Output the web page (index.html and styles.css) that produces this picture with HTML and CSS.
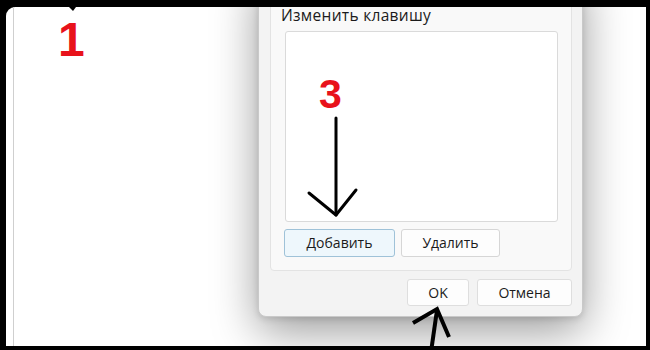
FILE: index.html
```html
<!DOCTYPE html>
<html lang="ru">
<head>
<meta charset="utf-8">
<link rel="stylesheet" href="styles.css">
</head>
<body>
<div class="frame">
  <div class="desk">
    <div class="dialog">
      <div class="group">
        <div class="label">Изменить клавишу</div>
        <div class="list"></div>
        <div class="row">
          <button class="btn btn-add">Добавить</button>
          <button class="btn btn-del">Удалить</button>
        </div>
      </div>
      <div class="footer">
        <button class="btn btn-ok">OK</button>
        <button class="btn btn-cancel">Отмена</button>
      </div>
    </div>
  </div>
</div>
<div class="top-band"></div>
<div class="num num-1">1</div>
<div class="num num-3">3</div>
<svg class="marks" width="650" height="350" viewBox="0 0 650 350">
  <polygon points="69,7 76,7 73,11" fill="#000"/>
  <g stroke="#000" stroke-width="3" fill="none" stroke-linecap="round" stroke-linejoin="round">
    <line x1="336" y1="118" x2="336" y2="215"/>
    <polyline points="309,193 336,215 356,190"/>
  </g>
  <g stroke="#000" stroke-width="4" fill="none" stroke-linecap="butt" stroke-linejoin="miter">
    <line x1="437" y1="310" x2="431" y2="352"/>
    <polyline points="413,323 437,309 449,337"/>
  </g>
</svg>
</body>
</html>
```
FILE: styles.css
```css
* { box-sizing: border-box; }
html, body { margin: 0; padding: 0; }
body {
  width: 650px;
  height: 350px;
  background: #000;
  position: relative;
  overflow: hidden;
  font-family: "Open Sans", "Noto Sans", sans-serif;
}
.frame {
  padding: 7px 4px 4px 6px;
  height: 350px;
}
.desk {
  position: relative;
  height: 339px;
  background: #fff;
  border-top-left-radius: 9px;
}
.desk::before {
  content: "";
  position: absolute;
  left: 7px;
  top: 0;
  bottom: 0;
  width: 1px;
  background: #cfcfcf;
}
.top-band {
  position: absolute;
  left: 0;
  top: 0;
  width: 650px;
  height: 7px;
  background: #000;
}
.dialog {
  position: absolute;
  left: 252px;
  top: -37px;
  width: 325px;
  background: #f3f3f3;
  border: 1px solid #c9c9c9;
  border-radius: 8px;
  padding: 11px 10px 10px 11px;
  box-shadow: 0 14px 46px rgba(0,0,0,0.4), 0 2px 6px rgba(0,0,0,0.12);
}
.group {
  background: #f9f9f9;
  border: 1px solid #e3e3e3;
  border-radius: 4px;
  padding: 24px 13px 13px 10px;
}
.label {
  font-size: 15.5px;
  line-height: 16px;
  letter-spacing: 0.3px;
  color: #1b1b1b;
  white-space: nowrap;
}
.list {
  margin: 8px 0 0 4px;
  height: 191px;
  background: #fff;
  border: 1px solid #dadada;
  border-radius: 3px;
}
.row {
  display: flex;
  gap: 6px;
  margin: 7px 0 0 3px;
}
.btn {
  font-family: "Open Sans", "Noto Sans", sans-serif;
  font-size: 14px;
  color: #1b1b1b;
  background: #fdfdfd;
  border: 1px solid #d6d6d6;
  border-radius: 3px;
  padding: 0;
  height: 28px;
  line-height: 24px;
}
.btn-add {
  width: 111px;
  background: #eef7fc;
  border-color: #9fc2d8;
}
.btn-del { width: 99px; }
.footer {
  display: flex;
  justify-content: flex-end;
  gap: 8px;
  margin-top: 8px;
}
.btn-ok, .btn-cancel {
  height: 27px;
  border-color: #dedede;
}
.btn-ok { width: 62px; }
.btn-cancel { width: 95px; }
.num {
  position: absolute;
  font-family: "Liberation Sans", Arial, sans-serif;
  font-weight: bold;
  color: #e8121b;
  line-height: 1;
}
.num-1 {
  left: 58px;
  top: 16px;
  font-size: 48px;
}
.num-3 {
  left: 319px;
  top: 74px;
  font-size: 41px;
}
.marks {
  position: absolute;
  left: 0;
  top: 0;
}
```
